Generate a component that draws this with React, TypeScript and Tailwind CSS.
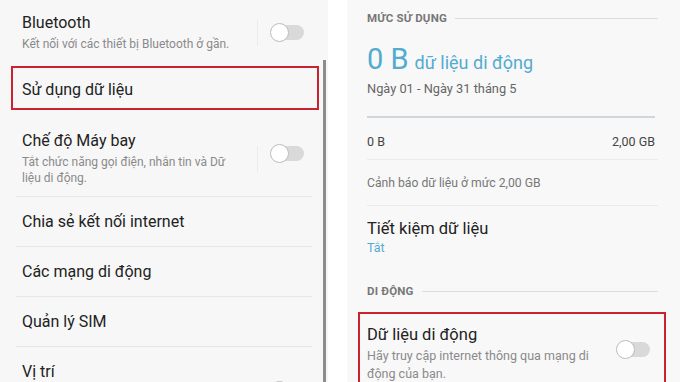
import React from "react";

/* ------------------------------ Pieces ---------------------------------- */
function Toggle() {
  return (
    <div className="relative h-[19px] w-[34px] shrink-0">
      <div className="absolute left-[4px] right-0 top-[2px] h-[15px] rounded-full bg-[#d9d9d9]" />
      <div className="absolute left-0 top-0 h-[19px] w-[19px] rounded-full border border-[#bdbdbd] bg-white" />
    </div>
  );
}

function SimpleRow({ label }: { label: string }) {
  return (
    <div className="mx-[16px] flex h-[50px] items-center border-b border-[#e6e6e6] px-[6px] text-[16px] text-[#222]">
      {label}
    </div>
  );
}

function SectionLabel({ label }: { label: string }) {
  return (
    <div className="flex items-center gap-[8px]">
      <span className="text-[11.5px] font-bold tracking-[0.2px] text-[#777]">{label}</span>
      <div className="h-px flex-1 bg-[#dcdcdc]" />
    </div>
  );
}

/* ---------------------------- Left screen -------------------------------- */
function LeftScreen() {
  return (
    <div className="relative h-full w-[328px] shrink-0 overflow-hidden bg-[#f7f7f7]">
      {/* Bluetooth */}
      <div className="flex items-center pl-[22px] pr-[24px] pt-[13px]">
        <div className="flex-1">
          <div className="text-[16px] leading-[20px] text-[#222]">Bluetooth</div>
          <div className="mt-[3px] text-[12px] leading-[16px] text-[#8a8a8a]">
            Kết nối với các thiết bị Bluetooth ở gần.
          </div>
        </div>
        <div className="mr-[12px] h-[26px] w-px bg-[#ececec]" />
        <Toggle />
      </div>

      {/* highlighted */}
      <div className="ml-[11px] mr-[9px] mt-[14px] flex h-[44px] items-center border-2 border-[#c8232f] pl-[9px] pt-[3px] text-[16px] text-[#222]">
        Sử dụng dữ liệu
      </div>

      {/* Airplane mode */}
      <div className="mx-[16px] flex items-center border-b border-[#e6e6e6] pb-[10px] pl-[6px] pr-[8px] pt-[21px]">
        <div className="flex-1 pr-[30px]">
          <div className="text-[16px] leading-[20px] text-[#222]">Chế độ Máy bay</div>
          <div className="mt-[3px] text-[12px] leading-[16px] text-[#8a8a8a]">
            Tắt chức năng gọi điện, nhắn tin và Dữ liệu di động.
          </div>
        </div>
        <div className="mr-[12px] h-[26px] w-px bg-[#ececec]" />
        <div className="-mt-[10px]">
          <Toggle />
        </div>
      </div>

      <SimpleRow label="Chia sẻ kết nối internet" />
      <SimpleRow label="Các mạng di động" />
      <SimpleRow label="Quản lý SIM" />
      <div className="mx-[16px] flex h-[50px] items-center justify-between px-[6px] text-[16px] text-[#222]">
        <span>Vị trí</span>
        <div className="mr-[2px] mt-[36px]">
          <Toggle />
        </div>
      </div>

      {/* scrollbar */}
      <div className="absolute right-[2px] top-[60px] h-[330px] w-[3px] bg-[#8c8c8c]" />
    </div>
  );
}

/* ---------------------------- Right screen ------------------------------- */
function RightScreen() {
  return (
    <div className="h-full flex-1 overflow-hidden bg-[#f8f8f8] pl-[20px] pr-[22px]">
      <div className="pt-[10px]">
        <SectionLabel label="MỨC SỬ DỤNG" />
      </div>

      <div className="mt-[15px] flex items-baseline gap-[6px] text-[#52abd0]">
        <span className="text-[29px] leading-[34px]">0 B</span>
        <span className="text-[18px]">dữ liệu di động</span>
      </div>
      <div className="mt-[4px] text-[12.8px] leading-[18px] text-[#666]">Ngày 01 - Ngày 31 tháng 5</div>

      <div className="mt-[18px] mr-[3px] h-[2px] bg-[#cfd6dc]" />

      <div className="flex items-center justify-between border-b border-[#ebebeb] pb-[9px] pr-[3px] pt-[16px] text-[12.5px] leading-[16px] text-[#444]">
        <span>0 B</span>
        <span>2,00 GB</span>
      </div>

      <div className="flex h-[46px] items-center border-b border-[#ebebeb] text-[12.2px] text-[#777]">
        Cảnh báo dữ liệu ở mức 2,00 GB
      </div>

      <div className="pt-[12px]">
        <div className="text-[16.5px] leading-[22px] text-[#222]">Tiết kiệm dữ liệu</div>
        <div className="text-[12.5px] leading-[16px] text-[#52abd0]">Tắt</div>
      </div>

      <div className="mt-[27px]">
        <SectionLabel label="DI ĐỘNG" />
      </div>

      <div className="-ml-[9px] -mr-[8px] mt-[11px] flex h-[90px] items-start border-2 border-b-0 border-[#c8232f] pl-[7px] pr-[14px] pt-[10px]">
        <div className="flex-1 pr-[14px]">
          <div className="text-[16.5px] leading-[22px] text-[#222]">Dữ liệu di động</div>
          <div className="mt-[1px] text-[12.5px] leading-[18px] text-[#8a8a8a]">
            Hãy truy cập internet thông qua mạng di động của bạn.
          </div>
        </div>
        <div className="mt-[16px]">
          <Toggle />
        </div>
      </div>
    </div>
  );
}

/* ------------------------------- App ------------------------------------ */
export default function App() {
  return (
    <div
      className="flex h-[382px] w-[680px] overflow-hidden bg-white"
      style={{ fontFamily: "Roboto, 'Noto Sans', sans-serif" }}
    >
      <LeftScreen />
      <div className="w-[19px] shrink-0 bg-white" />
      <RightScreen />
    </div>
  );
}
